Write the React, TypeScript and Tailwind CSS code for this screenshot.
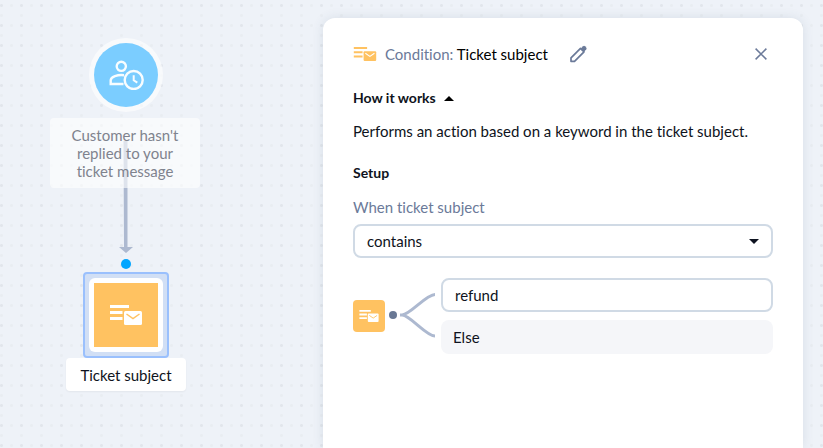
import React from "react";

function TicketMailIcon({ className, flapClassName }: { className: string; flapClassName: string }) {
  return (
    <svg viewBox="0 0 32 20" className={className} fill="currentColor" aria-hidden="true">
      <path d="M0 0h19v3H0zM0 6h12.500v3H0zM0 12h12.500v3H0z" />
      <rect x="14" y="6" width="18" height="14" rx="1.500" />
      <path d="M16.500 9l6.500 4.500L29.500 9" fill="none" strokeWidth="1.500" className={flapClassName} />
    </svg>
  );
}

function CustomerWaitingIcon() {
  return (
    <svg viewBox="-1 0 36 30" className="w-9 h-[30px] text-white/95" fill="none" stroke="currentColor" strokeWidth="2.400" aria-hidden="true">
      <circle cx="12.300" cy="6.300" r="4.600" />
      <path d="M15 15.200C8.500 14.400 1.700 17 1.700 20.300V24H14.500" />
      <circle cx="24.700" cy="20" r="9" />
      <path d="M24.700 15.200V20.300L28.300 22.600" strokeWidth="2" />
    </svg>
  );
}

function Caret({ className }: { className: string }) {
  return (
    <svg viewBox="0 0 10 5" className={className} fill="currentColor" aria-hidden="true">
      <path d="M0 0h10L5 5z" />
    </svg>
  );
}

function Flow() {
  return (
    <section className="w-[323px] shrink-0 pl-[50px] pt-[38px]">
      <div className="w-[152px] flex flex-col items-center">
        <div className="w-[74px] h-[74px] rounded-full bg-white/60 flex items-center justify-center">
          <div className="w-16 h-16 rounded-full bg-[#7bcdff] flex items-center justify-center">
            <CustomerWaitingIcon />
          </div>
        </div>

        <div className="relative self-start w-[150px] mt-1.5">
          <svg viewBox="0 0 14 112" className="absolute left-[69px] top-[23px] w-3.5 h-28 text-[#adb9d0]" fill="currentColor" aria-hidden="true">
            <path d="M4.500 0h4v106H14l-7 6-7-6h5z" />
          </svg>
          <p className="relative h-[70px] rounded bg-white/60 flex items-center justify-center px-4 text-center leading-[18px] text-[#7f838e]">
            Customer hasn't replied to your ticket message
          </p>
        </div>

        <span className="w-2.5 h-2.5 mt-[71px] rounded-full bg-[#00a5ff]" />

        <div className="mt-[3px] w-[86px] h-[86px] rounded border-2 border-[#9ac0fd] bg-[#d1dff5] flex items-center justify-center">
          <div className="w-[74px] h-[74px] rounded-md bg-white flex items-center justify-center">
            <div className="w-16 h-16 bg-[#ffc261] flex items-center justify-center">
              <TicketMailIcon className="w-8 h-5 text-white" flapClassName="stroke-[#ffc261]" />
            </div>
          </div>
        </div>
        <p className="h-[33px] px-3.5 rounded-sm bg-white shadow-xs flex items-center text-[#0e1320]">Ticket subject</p>
      </div>
    </section>
  );
}

function ConditionPanel() {
  return (
    <section className="flex-1 min-w-0 mt-[18px] mr-5 px-[30px] pt-6 rounded-t-xl bg-white shadow-[0_0_12px_rgba(60,80,110,0.12)]">
      <header className="h-6 flex items-center">
        <TicketMailIcon className="w-6 h-3.5 mr-2 text-[#ffc261]" flapClassName="stroke-white" />
        <h1>
          <span className="text-[#6b7a99]">Condition:</span> <span className="text-black">Ticket subject</span>
        </h1>
        <button type="button" aria-label="Rename" className="ml-5 text-[#6b7a99]">
          <svg viewBox="0 0 20 20" className="w-5 h-5" aria-hidden="true">
            <path d="M3 17.300v-3.500L12.500 4.300l3.500 3.500L6.500 17.300z" fill="none" stroke="currentColor" strokeWidth="1.700" strokeLinejoin="round" />
            <path d="M12.800 4.500l2.300-2.200a1.400 1.400 0 0 1 1.900 0l1.200 1.200a1.400 1.400 0 0 1 0 1.900l-2.200 2.300z" fill="currentColor" />
          </svg>
        </button>
        <button type="button" aria-label="Close" className="ml-auto w-6 h-6 flex items-center justify-center text-[#6b7a99]">
          <svg viewBox="0 0 12 12" className="w-3 h-3" fill="none" stroke="currentColor" strokeWidth="1.500" aria-hidden="true">
            <path d="M.6.6l10.800 10.800M11.400.6L.6 11.400" />
          </svg>
        </button>
      </header>

      <button type="button" className="mt-[22px] flex items-center gap-2 text-sm leading-5 font-bold">
        How it works
        <Caret className="w-2.5 h-[5px] rotate-180 text-black" />
      </button>
      <p className="mt-[13px]">Performs an action based on a keyword in the ticket subject.</p>

      <h2 className="mt-[22px] text-sm leading-5 font-bold">Setup</h2>
      <label htmlFor="rule" className="mt-3.5 block text-[#6b7a99]">When ticket subject</label>
      <div className="relative mt-[7px]">
        <select id="rule" defaultValue="contains" className="w-full h-[34px] px-3 appearance-none rounded-lg border-2 border-[#d0dae5] bg-white">
          <option value="contains">contains</option>
        </select>
        <Caret className="absolute right-3.5 top-[15px] w-2.5 h-[5px] pointer-events-none" />
      </div>

      <div className="mt-5 flex items-center">
        <div className="w-8 h-8 rounded-sm bg-[#ffc261] flex items-center justify-center">
          <TicketMailIcon className="w-5 h-3 text-white" flapClassName="stroke-[#ffc261]" />
        </div>
        <div className="ml-1 mr-[5px] pb-[3px] flex items-center gap-[3px]">
          <span className="w-2 h-2 rounded-full bg-[#697894]" />
          <svg viewBox="0 0 36 46" className="w-9 h-[46px]" fill="none" stroke="#adb9d0" strokeWidth="3" aria-hidden="true">
            <path d="M0 23H2C10 23 26 2.500 35 2.500M2 23C10 23 26 44 35 44" />
          </svg>
        </div>
        <div className="flex-1 min-w-0 flex flex-col gap-2">
          <input type="text" aria-label="Keyword" defaultValue="refund" className="w-full h-[34px] px-3 rounded-lg border-2 border-[#d0dae5] bg-white" />
          <p className="h-[34px] px-3 rounded-lg bg-[#f5f6f9] flex items-center">Else</p>
        </div>
      </div>
    </section>
  );
}

export default function App() {
  return (
    <main className="min-h-screen flex bg-[#eef2f8] bg-[radial-gradient(circle_at_1.5px_5.5px,#e2e6ec_1px,transparent_2px),radial-gradient(circle_at_11.5px_5.5px,#e9edf2_1px,transparent_2px),radial-gradient(circle_at_1.5px_15.5px,#e9edf2_1px,transparent_2px)] bg-[size:20px_20px] font-['Lato',sans-serif] text-[15px] leading-5 text-[#0e1320] [font-variant-ligatures:none]">
      <Flow />
      <ConditionPanel />
    </main>
  );
}
